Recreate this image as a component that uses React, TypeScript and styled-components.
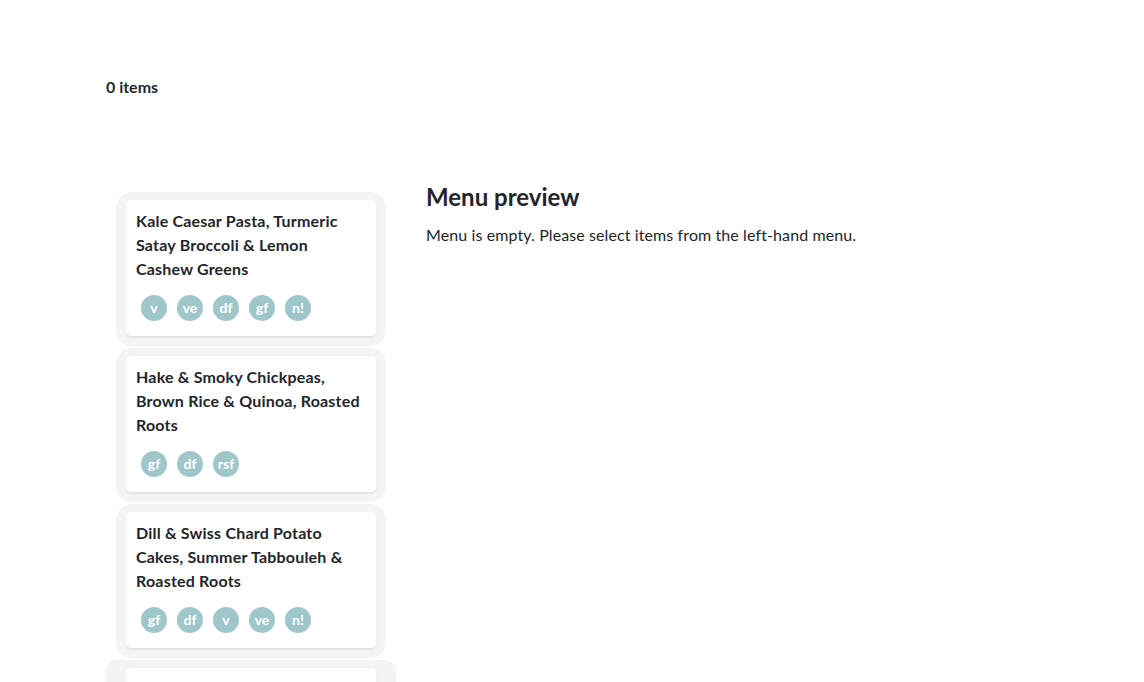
import styled, { createGlobalStyle } from "styled-components";

const GlobalStyle = createGlobalStyle`
  html, body {
    margin: 0;
    padding: 0;
    background: #fff;
    font-family: Lato, "Noto Sans", sans-serif;
    color: #24252a;
  }
`;

const Page = styled.div`
  padding: 77px 106px 0;
  height: 682px;
  box-sizing: border-box;
  overflow: hidden;
`;

const Count = styled.div`
  font-size: 16px;
  font-weight: 700;
  line-height: 20px;
  margin-bottom: 95px;
`;

const Layout = styled.div`
  display: grid;
  grid-template-columns: 290px 1fr;
  column-gap: 30px;
`;

const List = styled.ul`
  list-style: none;
  margin: 0;
  padding: 0 10px;
  display: flex;
  flex-direction: column;
  gap: 2px;
`;

const Slot = styled.li<{ $wide?: boolean }>`
  background: #f4f4f4;
  padding: ${(p) => (p.$wide ? "8px 20px 10px" : "8px 10px 10px")};
  margin: ${(p) => (p.$wide ? "0 -10px" : "0")};
  border-radius: ${(p) => (p.$wide ? "10px 10px 0 0" : "16px")};
`;

const Card = styled.div<{ $blank?: boolean }>`
  background: #fff;
  border-radius: 5px;
  box-shadow: 0 2px 2px rgba(0, 0, 0, 0.07);
  padding: 9px 10px 15px;
  min-height: ${(p) => (p.$blank ? "136px" : "0")};
  box-sizing: border-box;
`;

const Title = styled.h2`
  margin: 0 0 14px;
  font-size: 16px;
  font-weight: 700;
  line-height: 24px;
  letter-spacing: 0.2px;
`;

const Tags = styled.div`
  display: flex;
  gap: 10px;
  padding-left: 5px;
`;

const Tag = styled.span`
  width: 26px;
  height: 26px;
  border-radius: 50%;
  background: #9fc6ca;
  color: #fff;
  font-size: 14px;
  font-weight: 700;
  display: flex;
  align-items: center;
  justify-content: center;
  line-height: 1;
  padding-bottom: 1px;
  box-sizing: border-box;
`;

const Preview = styled.section`
  padding-top: 0;
`;

const Heading = styled.h1`
  margin: -9px 0 13px;
  font-size: 24px;
  font-weight: 700;
  line-height: 28px;
`;

const Note = styled.p`
  margin: 0;
  font-size: 16px;
  line-height: 22px;
  letter-spacing: 0.1px;
`;

const dishes = [
  {
    title: "Kale Caesar Pasta, Turmeric Satay Broccoli & Lemon Cashew Greens",
    tags: ["v", "ve", "df", "gf", "n!"],
  },
  {
    title: "Hake & Smoky Chickpeas, Brown Rice & Quinoa, Roasted Roots",
    tags: ["gf", "df", "rsf"],
  },
  {
    title: "Dill & Swiss Chard Potato Cakes, Summer Tabbouleh & Roasted Roots",
    tags: ["gf", "df", "v", "ve", "n!"],
  },
];

export default function App() {
  return (
    <Page>
      <GlobalStyle />
      <Count>0 items</Count>
      <Layout>
        <List>
          {dishes.map((d) => (
            <Slot key={d.title}>
              <Card>
                <Title>{d.title}</Title>
                <Tags>
                  {d.tags.map((t) => (
                    <Tag key={t}>{t}</Tag>
                  ))}
                </Tags>
              </Card>
            </Slot>
          ))}
          <Slot $wide>
            <Card $blank />
          </Slot>
        </List>
        <Preview>
          <Heading>Menu preview</Heading>
          <Note>Menu is empty. Please select items from the left-hand menu.</Note>
        </Preview>
      </Layout>
    </Page>
  );
}
